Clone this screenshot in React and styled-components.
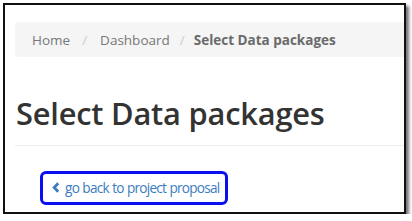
import styled, { createGlobalStyle } from "styled-components";

const GlobalStyle = createGlobalStyle`
  html, body {
    margin: 0;
    padding: 0;
    background: #ffffff;
  }
  body {
    font-family: "Open Sans", "Noto Sans", sans-serif;
  }
`;

const Frame = styled.div`
  margin: 3px 0 0 3px;
  width: 403px;
  height: 211px;
  border: 2px solid #111;
  box-shadow: 3px 3px 3px rgba(0, 0, 0, 0.55);
  background: #fff;
  overflow: hidden;
  padding: 17px 0 0 10px;
  box-sizing: border-box;
  display: flex;
  flex-direction: column;
`;

const Breadcrumb = styled.ol`
  display: flex;
  align-items: center;
  list-style: none;
  margin: 0;
  padding: 0 0 0 17px;
  height: 35px;
  width: 420px;
  background: #f5f5f5;
  border-radius: 4px;
  font-size: 13.5px;
  color: #777;
`;

const Crumb = styled.li`
  color: ${(p) => (p.$active ? "#6a6a6a" : "#777")};
  font-weight: ${(p) => (p.$active ? 700 : 400)};
  white-space: nowrap;
`;

const Sep = styled.li`
  color: #ccc;
  padding: ${(p) => (p.$wide ? "0 13px 0 12px" : "0 9px 0 10px")};
`;

const Title = styled.h1`
  margin: 36px 0 0 1px;
  font-size: 30.8px;
  font-weight: 600;
  color: #333;
  line-height: 40px;
  letter-spacing: -0.2px;
  white-space: nowrap;
`;

const Rule = styled.hr`
  margin: 12px 0 0 0;
  border: 0;
  border-top: 1px solid #eee;
  width: 400px;
`;

const BackRow = styled.div`
  margin: 25px 0 0 25px;
`;

const BackLink = styled.a`
  display: inline-flex;
  align-items: center;
  gap: 5px;
  height: 34px;
  padding: 0 6px 1px 9px;
  box-sizing: border-box;
  border: 3px solid #0a0ff0;
  border-radius: 6px;
  color: #3b7cc0;
  font-size: 13.6px;
  letter-spacing: -0.75px;
  word-spacing: 0.5px;
  text-decoration: none;
  white-space: nowrap;
`;

const Chevron = () => (
  <svg width="8" height="11" viewBox="0 0 8 11">
    <path d="M6.2 1.2 L2.2 5.5 L6.2 9.8" fill="none" stroke="#3b7cc0" strokeWidth="2.8" />
  </svg>
);

export default function App() {
  return (
    <>
      <GlobalStyle />
      <Frame>
        <Breadcrumb>
          <Crumb>Home</Crumb>
          <Sep $wide>/</Sep>
          <Crumb>Dashboard</Crumb>
          <Sep>/</Sep>
          <Crumb $active>Select Data packages</Crumb>
        </Breadcrumb>
        <Title>Select Data packages</Title>
        <Rule />
        <BackRow>
          <BackLink href="#">
            <Chevron />
            go back to project proposal
          </BackLink>
        </BackRow>
      </Frame>
    </>
  );
}
